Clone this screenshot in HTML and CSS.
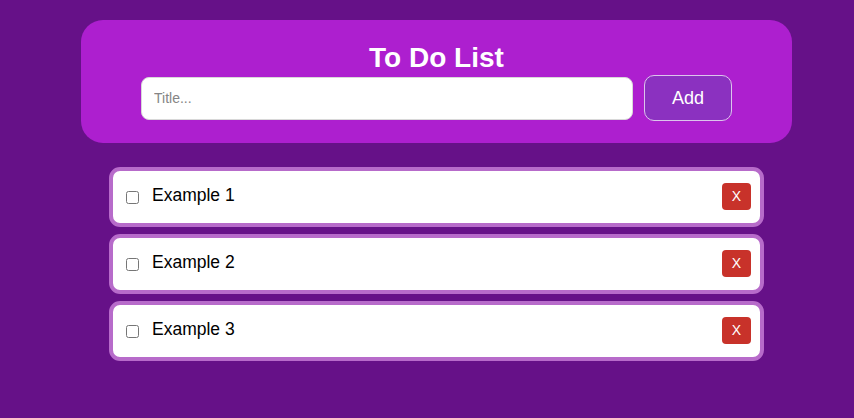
FILE: index.html
```html
<!DOCTYPE html>
<html>
<head>
<meta charset="utf-8">
<link rel="stylesheet" href="styles.css">
</head>
<body>
<div class="page">
  <div class="header">
    <h1 class="title">To Do List</h1>
    <div class="add-row">
      <input class="title-input" type="text" placeholder="Title...">
      <button class="add-btn">Add</button>
    </div>
  </div>
  <ul class="list">
    <li class="item">
      <input class="check" type="checkbox">
      <span class="label">Example 1</span>
      <button class="del">X</button>
    </li>
    <li class="item">
      <input class="check" type="checkbox">
      <span class="label">Example 2</span>
      <button class="del">X</button>
    </li>
    <li class="item">
      <input class="check" type="checkbox">
      <span class="label">Example 3</span>
      <button class="del">X</button>
    </li>
  </ul>
</div>
</body>
</html>
```
FILE: styles.css
```css
html, body {
  margin: 0;
  padding: 0;
  background: #661188;
  font-family: "Liberation Sans", Arial, sans-serif;
}
.page {
  display: flex;
  flex-direction: column;
  align-items: center;
  padding: 20px 0 0 19px;
}
.header {
  width: 711px;
  box-sizing: border-box;
  height: 123px;
  background: #ad1fcf;
  border-radius: 22px;
  display: flex;
  flex-direction: column;
  align-items: center;
  padding-top: 22px;
}
.title {
  margin: 0;
  color: #fff;
  font-size: 28px;
  font-weight: bold;
  line-height: 32px;
}
.add-row {
  display: flex;
  align-items: center;
  gap: 11px;
  margin-top: 1px;
}
.title-input {
  width: 492px;
  height: 43px;
  box-sizing: border-box;
  border: 1px solid #d8d8d8;
  border-radius: 8px;
  padding: 0 12px;
  font-family: "Liberation Sans", Arial, sans-serif;
  font-size: 14px;
  background: #fff;
  outline: none;
}
.title-input::placeholder {
  color: #858585;
}
.add-btn {
  width: 88px;
  height: 46px;
  box-sizing: border-box;
  background: #8b31c0;
  border: 1px solid #dcc4ec;
  border-radius: 10px;
  color: #fff;
  font-family: "Liberation Sans", Arial, sans-serif;
  font-size: 18px;
}
.list {
  list-style: none;
  margin: 24px 0 0 0;
  padding: 0;
  width: 655px;
  display: flex;
  flex-direction: column;
  gap: 7px;
}
.item {
  box-sizing: border-box;
  height: 60px;
  background: #fff;
  border: 4px solid #b76bca;
  border-radius: 11px;
  display: flex;
  align-items: center;
  padding: 0 9px 0 9px;
}
.check {
  width: 13px;
  height: 13px;
  margin: 3px 3px 3px 4px;
  position: relative;
  top: 0px;
}
.label {
  margin-left: 10px;
  font-size: 17.5px;
  color: #000;
  flex: 1;
  position: relative;
  top: -2px;
}
.del {
  width: 29px;
  height: 27px;
  box-sizing: border-box;
  padding: 0;
  background: #c8322a;
  border: none;
  border-radius: 4px;
  color: #fff;
  font-family: "Liberation Sans", Arial, sans-serif;
  font-size: 14px;
  font-weight: 300;
  position: relative;
  top: -1px;
}
```
